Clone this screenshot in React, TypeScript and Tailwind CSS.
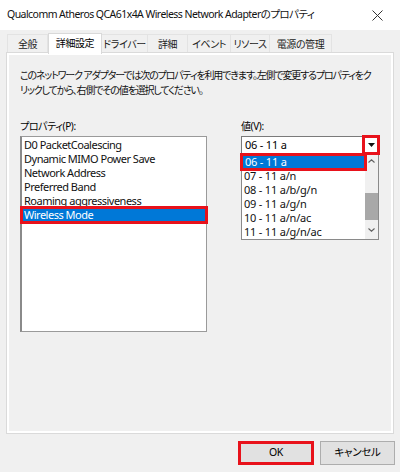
import React from 'react'

const tabs = [
  { label: '全般', w: 'w-[41px]' },
  { label: '詳細設定', w: 'w-[54px]', active: true },
  { label: 'ドライバー', w: 'w-[46px]' },
  { label: '詳細', w: 'w-[40px]' },
  { label: 'イベント', w: 'w-[43px]' },
  { label: 'リソース', w: 'w-[39px]' },
  { label: '電源の管理', w: 'w-[62px]' },
]

const properties = [
  'D0 PacketCoalescing',
  'Dynamic MIMO Power Save',
  'Network Address',
  'Preferred Band',
  'Roaming aggressiveness',
  'Wireless Mode',
]

const values = ['06 - 11 a', '07 - 11 a/n', '08 - 11 a/b/g/n', '09 - 11 a/g/n', '10 - 11 a/n/ac', '11 - 11 a/g/n/ac']

function RedFrame() {
  return <div className="pointer-events-none absolute -inset-x-[2px] -inset-y-[2px] border-[3px] border-[#e8121b]" />
}

export default function App() {
  return (
    <div className="w-[400px] h-[472px] bg-[#f0f0f0] text-black font-['Noto_Sans','Noto_Sans_CJK_JP',sans-serif] overflow-hidden whitespace-nowrap">
      {/* title bar */}
      <div className="h-[30px] bg-white flex items-center justify-between pl-[7px] pr-[12px]">
        <span className="text-[10.5px] tracking-[-0.55px] [font-feature-settings:'palt'] text-[#111]">
          Qualcomm Atheros QCA61x4A Wireless Network Adapterのプロパティ
        </span>
        <svg width="11" height="11" viewBox="0 0 11 11" className="mr-[5px]">
          <path d="M0.5 0.5 L10.5 10.5 M10.5 0.5 L0.5 10.5" stroke="#333" strokeWidth="1" />
        </svg>
      </div>

      <div className="px-[7px]">
        {/* tabs */}
        <div className="h-[23px] flex items-end text-[10px] tracking-[-0.4px] [font-feature-settings:'palt']">
          {tabs.map((t) =>
            t.active ? (
              <div
                key={t.label}
                className={`${t.w} h-[21px] bg-white border border-b-0 border-[#d9d9d9] flex items-center justify-center relative z-10 -mb-[1px] pb-[1px]`}
              >
                {t.label}
              </div>
            ) : (
              <div
                key={t.label}
                className={`${t.w} h-[19px] border border-b-0 border-l-0 first:border-l border-[#e3e3e3] flex items-center justify-center text-[#222]`}
              >
                {t.label}
              </div>
            )
          )}
        </div>

        {/* panel */}
        <div className="h-[380px] border-2 border-white outline outline-1 outline-[#dadada] px-[11px] pt-[13px]">
          <p className="text-[10px] leading-[15px] [font-feature-settings:'palt'] tracking-[-1.15px] text-[#111]">
            このネットワーク アダプターでは次のプロパティを利用できます。左側で変更するプロパティをク
            <br />
            リックしてから、右側でその値を選択してください。
          </p>

          <div className="flex gap-[34px] mt-[21px]">
            {/* left column */}
            <div className="w-[187px]">
              <div className="text-[10px] tracking-[-0.4px] leading-[15px] h-[17px] [font-feature-settings:'palt']">プロパティ(P):</div>
              <div className="h-[196px] bg-white border border-[#9a9a9a] border-l-2 border-l-[#8a8a8a] pt-[1px] text-[11px] tracking-[-0.5px] leading-[14px]">
                {properties.map((p) =>
                  p === 'Wireless Mode' ? (
                    <div key={p} className="relative h-[14px] bg-[#0078d7] text-white pl-[2px]">
                      {p}
                      <RedFrame />
                    </div>
                  ) : (
                    <div key={p} className="h-[14px] pl-[2px] text-[#111]">
                      {p}
                    </div>
                  )
                )}
              </div>
            </div>

            {/* right column */}
            <div className="w-[138px]">
              <div className="text-[10px] tracking-[-0.4px] leading-[15px] h-[17px] [font-feature-settings:'palt']">値(V):</div>
              <div className="h-[18px] bg-white border border-[#7a7a7a] flex items-center text-[11px] tracking-[-0.2px]">
                <span className="flex-1 pl-[3px]">06 - 11 a</span>
                <div className="relative w-[14px] h-full flex items-center justify-center">
                  <svg width="7" height="4" viewBox="0 0 7 4">
                    <path d="M0 0 H7 L3.5 4 Z" fill="#111" />
                  </svg>
                  <RedFrame />
                </div>
              </div>
              <div className="h-[86px] bg-white border border-[#8a8a8a] border-t-0 flex text-[11px] tracking-[-0.2px] leading-[14px]">
                <div className="flex-1 pt-[1px]">
                  {values.map((v, i) =>
                    i === 0 ? (
                      <div key={v} className="relative h-[14px] bg-[#0078d7] text-white pl-[3px]">
                        {v}
                        <RedFrame />
                      </div>
                    ) : (
                      <div key={v} className="h-[14px] pl-[2px] text-[#111]">
                        {v}
                      </div>
                    )
                  )}
                </div>
                <div className="w-[13px] bg-[#f0f0f0] flex flex-col">
                  <div className="h-[14px] flex items-center justify-center">
                    <svg width="7" height="4" viewBox="0 0 7 4">
                      <path d="M0.5 3.5 L3.5 0.8 L6.5 3.5" stroke="#606060" strokeWidth="1.1" fill="none" />
                    </svg>
                  </div>
                  <div className="h-[25px]" />
                  <div className="h-[27px] bg-[#a8a8a8]" />
                  <div className="flex-1 flex items-center justify-center">
                    <svg width="7" height="4" viewBox="0 0 7 4">
                      <path d="M0.5 0.5 L3.5 3.2 L6.5 0.5" stroke="#606060" strokeWidth="1.1" fill="none" />
                    </svg>
                  </div>
                </div>
              </div>
            </div>
          </div>
        </div>

        {/* buttons */}
        <div className="flex justify-end gap-[6px] mt-[8px] -mr-[2px] text-[10.5px] tracking-[-0.3px] [font-feature-settings:'palt']">
          <button className="w-[76px] h-[24px] bg-[#e1e1e1] border-[3px] border-[#e8121b] flex items-center justify-center">
            OK
          </button>
          <button className="w-[75px] h-[24px] bg-[#e1e1e1] border border-[#adadad] flex items-center justify-center">
            キャンセル
          </button>
        </div>
      </div>
    </div>
  )
}
